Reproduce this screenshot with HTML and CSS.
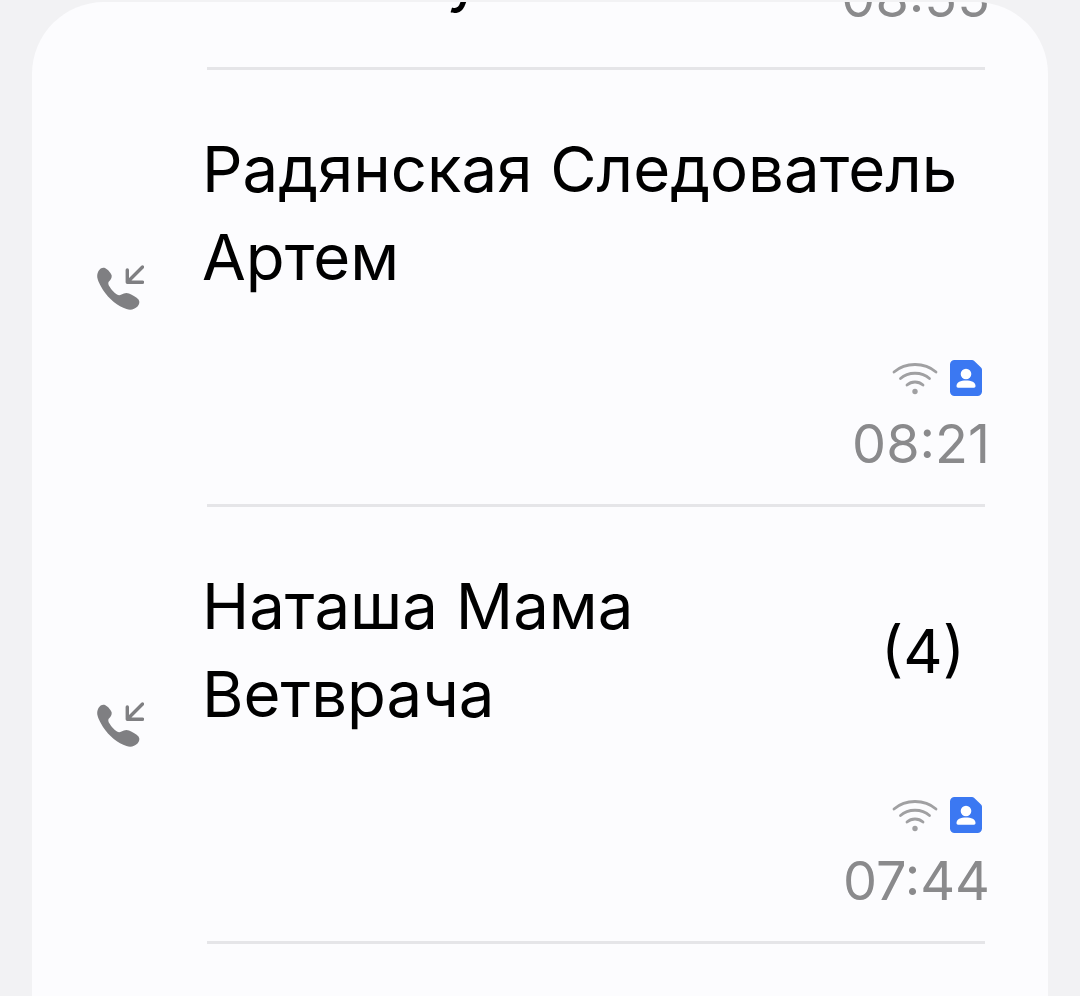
FILE: index.html
```html
<!DOCTYPE html>
<html lang="ru">
<head>
<meta charset="utf-8">
<title>Журнал вызовов</title>
<link rel="stylesheet" href="styles.css">
</head>
<body>
<svg class="defs" width="0" height="0" aria-hidden="true">
  <symbol id="call-in" viewBox="0 0 48 48">
    <path fill="currentColor" d="M2.500 6C4 3 7 2 9 3C12 4.500 15 8 15.700 10.500C16 13 14.500 15 12.500 17C12 18.500 12.500 20 13.500 21.500C15.500 25 18 27.500 21 29.500C22.500 30.500 24 30.300 25.500 29.500C28 28 30.500 27.500 33 28.500C36.500 30 40.500 32 42.500 34.500C44 36.500 43.500 39.500 41.500 41.500C38.500 44.500 34.500 45.500 30.500 44C22 41.500 13 34 7 25C3.500 19 1 14 1.200 11C1.200 9.500 1.700 7.500 2.500 6z"/>
    <path fill="none" stroke="currentColor" stroke-width="3.400" stroke-linecap="round" stroke-linejoin="round" d="M31.300 5V17.300H46.500M32 16.500 46.500 2"/>
  </symbol>
  <symbol id="wifi" viewBox="0 0 46 34">
    <g fill="none" stroke="currentColor" stroke-width="2.800" stroke-linecap="round">
      <path d="M2 11C13.500 1 32.500 1 44 11"/>
      <path d="M8.500 17.500C16 10.500 30 10.500 37.500 17.500"/>
      <path d="M15 24C19.500 20 26.500 20 31 24"/>
    </g>
    <circle cx="23" cy="30.500" r="2.700" fill="currentColor"/>
  </symbol>
  <symbol id="sim" viewBox="0 0 32 36">
    <path fill="#3b78f2" d="M4.500 0H22a3 3 0 0 1 2 .8l7 6.700a3 3 0 0 1 1 2.200V31.500a4.500 4.500 0 0 1-4.500 4.500h-23A4.500 4.500 0 0 1 0 31.500V4.500A4.500 4.500 0 0 1 4.500 0z"/>
    <circle cx="16" cy="14" r="5.300" fill="#fff"/>
    <path fill="#fff" d="M6.500 26c0-3.800 4.200-5.500 9.500-5.500s9.500 1.700 9.500 5.500c0 1-.6 1.700-1.500 1.700H8c-.9 0-1.500-.7-1.500-1.700z"/>
  </symbol>
</svg>
<main class="card">
  <section class="clipped">
    <div class="clipped-name">Антон Гусь</div>
    <div class="time">08:55</div>
  </section>
  <div class="divider"></div>
  <article class="row">
    <svg class="call-icon"><use href="#call-in"/></svg>
    <div class="body">
      <div class="head"><div class="name">Радянская Следователь Артем</div></div>
      <div class="meta">
        <div class="badges"><svg class="wifi"><use href="#wifi"/></svg><svg class="sim"><use href="#sim"/></svg></div>
        <div class="time">08:21</div>
      </div>
    </div>
  </article>
  <div class="divider"></div>
  <article class="row">
    <svg class="call-icon"><use href="#call-in"/></svg>
    <div class="body">
      <div class="head"><div class="name narrow">Наташа Мама Ветврача</div><div class="count">(4)</div></div>
      <div class="meta">
        <div class="badges"><svg class="wifi"><use href="#wifi"/></svg><svg class="sim"><use href="#sim"/></svg></div>
        <div class="time">07:44</div>
      </div>
    </div>
  </article>
  <div class="divider"></div>
</main>
</body>
</html>
```
FILE: styles.css
```css
* { box-sizing: border-box; }
html, body { height: 100%; }
body {
  margin: 0;
  overflow: hidden;
  background: #f2f2f4;
  font-family: Inter, "Noto Sans", sans-serif;
}
.defs { display: block; height: 0; }
.card {
  height: 994px;
  margin: 2px 32px 0;
  background: #fcfcfe;
  border-radius: 72px 72px 0 0;
  overflow: hidden;
}
.divider {
  height: 3px;
  margin: 0 63px 0 175px;
  background: #e5e5e8;
}
.clipped {
  height: 65px;
  display: flex;
  justify-content: space-between;
  align-items: flex-start;
  padding: 0 58px 0 178px;
  overflow: hidden;
}
.clipped-name {
  font-size: 63.5px;
  line-height: 89px;
  color: #000;
  margin-top: -70px;
  white-space: nowrap;
}
.clipped .time { margin-top: -37px; }
.row {
  height: 434px;
  display: flex;
  align-items: center;
}
.call-icon {
  flex: none;
  width: 48px;
  height: 48px;
  margin: 4px 58px 0 64px;
  color: #7f7f82;
}
.body {
  flex: 1;
  height: 100%;
  display: flex;
  flex-direction: column;
  justify-content: space-between;
  padding: 55px 58px 27px 0;
  min-width: 0;
}
.head {
  display: flex;
  align-items: center;
  justify-content: space-between;
}
.name {
  font-size: 63.5px;
  line-height: 88px;
  color: #000;
}
.name.narrow { width: 480px; }
.count {
  font-size: 61px;
  line-height: 89px;
  color: #000;
  margin: 3px 25px 0 0;
}
.meta {
  display: flex;
  flex-direction: column;
  align-items: flex-end;
}
.badges {
  display: flex;
  align-items: center;
  gap: 12px;
  margin: 0 8px 15px 0;
}
.wifi { width: 46px; height: 34px; color: #a0a0a2; }
.sim { width: 32px; height: 36px; }
.time {
  font-size: 54px;
  line-height: 66px;
  color: #8a8a8c;
}
```
